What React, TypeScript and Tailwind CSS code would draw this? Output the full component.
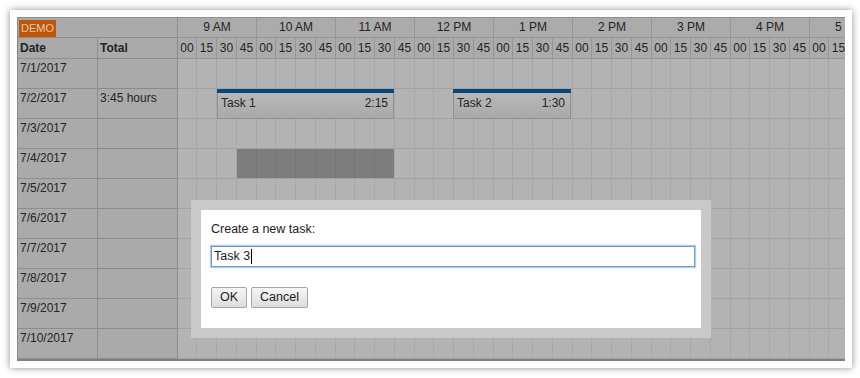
import React from "react";

const hours = ["9 AM", "10 AM", "11 AM", "12 PM", "1 PM", "2 PM", "3 PM", "4 PM", "5 PM"];
const minutes = ["00", "15", "30", "45"];
// 4 cells make one 79px hour
const cellW = ["w-[19px]", "w-[20px]", "w-[20px]", "w-[20px]"];
// the view is cut after 5 PM 15
const slots = hours.flatMap((h) => minutes.map((m, i) => ({ key: h + m, label: m, w: cellW[i] }))).slice(0, 34);

const rows = [
  { date: "7/1/2017", total: "" },
  { date: "7/2/2017", total: "3:45 hours" },
  { date: "7/3/2017", total: "" },
  { date: "7/4/2017", total: "" },
  { date: "7/5/2017", total: "" },
  { date: "7/6/2017", total: "" },
  { date: "7/7/2017", total: "" },
  { date: "7/8/2017", total: "" },
  { date: "7/9/2017", total: "" },
  { date: "7/10/2017", total: "" },
];

const font = { fontFamily: '"Liberation Sans", Arial, sans-serif' };

function TaskEvent({ name, duration, left, width, top }: { name: string; duration: string; left: number; width: number; top: number }) {
  return (
    <div className="absolute h-[30px] flex flex-col" style={{ left, width, top }}>
      <div className="h-[4px] bg-[#0b4776]" />
      <div className="flex-1 flex justify-between px-[3px] pt-[2px] leading-[16px] text-[12px] text-[#242424] border-x border-b border-[#8f8f8f] bg-gradient-to-b from-[#b8b8b8] to-[#a9a9a9]">
        <span>{name}</span>
        <span className="pr-[2px]">{duration}</span>
      </div>
    </div>
  );
}

function Scheduler() {
  return (
    <div className="flex w-[828px] overflow-hidden border-l border-t border-b-2 border-l-[#878787] border-t-[#8f8f8f] border-b-[#808080] text-[12px] text-[#242424]">
      <div className="w-[160px] shrink-0 bg-[#aaaaaa]">
        <div className="h-[20px] border-b border-r border-[#8e8e8e] pl-[1px] pt-[1px]">
          <span className="inline-block h-[17px] leading-[17px] px-[2px] text-[11px] bg-[#bf5506] text-[#e6c8b0]">DEMO</span>
        </div>
        <div className="h-[21px] flex font-bold">
          <div className="w-[80px] border-b border-r border-[#8e8e8e] pl-[2px] flex items-center">Date</div>
          <div className="w-[80px] border-b border-r border-[#8b8b8b] pl-[2px] flex items-center">Total</div>
        </div>
        {rows.map((r) => (
          <div key={r.date} className="h-[30px] flex">
            <div className="w-[80px] border-b border-r border-[#8e8e8e] pl-[2px] pt-[1px] leading-[16px]">{r.date}</div>
            <div className="w-[80px] border-b border-r border-[#8b8b8b] pl-[2px] pt-[1px] leading-[16px]">{r.total}</div>
          </div>
        ))}
      </div>

      <div className="relative flex-1 overflow-hidden">
        <div className="flex h-[20px] bg-[#ababab]">
          {hours.map((h) => (
            <div key={h} className="w-[79px] shrink-0 border-b border-r border-[#969696] flex items-center justify-center pb-[2px]">
              {h}
            </div>
          ))}
        </div>
        <div className="flex h-[21px] bg-[#ababab]">
          {slots.map((s) => (
            <div key={s.key} className={`${s.w} shrink-0 border-b border-r border-[#969696] flex items-center justify-center`}>
              {s.label}
            </div>
          ))}
        </div>
        {rows.map((r) => (
          <div key={r.date} className="flex h-[30px] bg-[#b3b3b3]">
            {slots.map((s) => (
              <div key={s.key} className={`${s.w} shrink-0 border-b border-r border-b-[#a3a3a3] border-r-[#a8a8a8]`} />
            ))}
          </div>
        ))}

        <TaskEvent name="Task 1" duration="2:15" left={39} width={177} top={71} />
        <TaskEvent name="Task 2" duration="1:30" left={275} width={118} top={71} />
        <div className="absolute left-[59px] top-[131px] w-[157px] h-[29px] bg-black/30" />
      </div>
    </div>
  );
}

function TaskDialog() {
  return (
    <div className="absolute left-[191px] top-[200px] w-[520px] p-[10px] bg-[#c9c9c9] text-[12.5px] text-[#222]">
      <div className="bg-white pt-[11px] pb-[20px] pl-[10px]">
        <div className="leading-[16px]">Create a new task:</div>
        <div className="mt-[9px] w-[484px] h-[21px] flex items-center pl-[2px] border border-[#6f98d8] shadow-[0_0_1px_1px_#b5cbee]">
          <span>Task 3</span>
          <span className="ml-[1px] w-[1px] h-[15px] bg-black" />
        </div>
        <div className="mt-[20px] flex gap-[4px]">
          <button className="h-[21px] px-[8px] border border-[#a5a5a5] rounded-[2px] bg-gradient-to-b from-[#f6f6f6] to-[#dddddd] leading-none">OK</button>
          <button className="h-[21px] px-[8px] border border-[#a5a5a5] rounded-[2px] bg-gradient-to-b from-[#f6f6f6] to-[#dddddd] leading-none">Cancel</button>
        </div>
      </div>
    </div>
  );
}

export default function App() {
  return (
    <div className="relative w-[860px] h-[378px] bg-white pt-[10px] pl-[10px] overflow-hidden" style={font}>
      <div className="w-[842px] p-[7px] bg-white shadow-[0_0_7px_rgba(0,0,0,0.45)]">
        <Scheduler />
      </div>
      <TaskDialog />
    </div>
  );
}
